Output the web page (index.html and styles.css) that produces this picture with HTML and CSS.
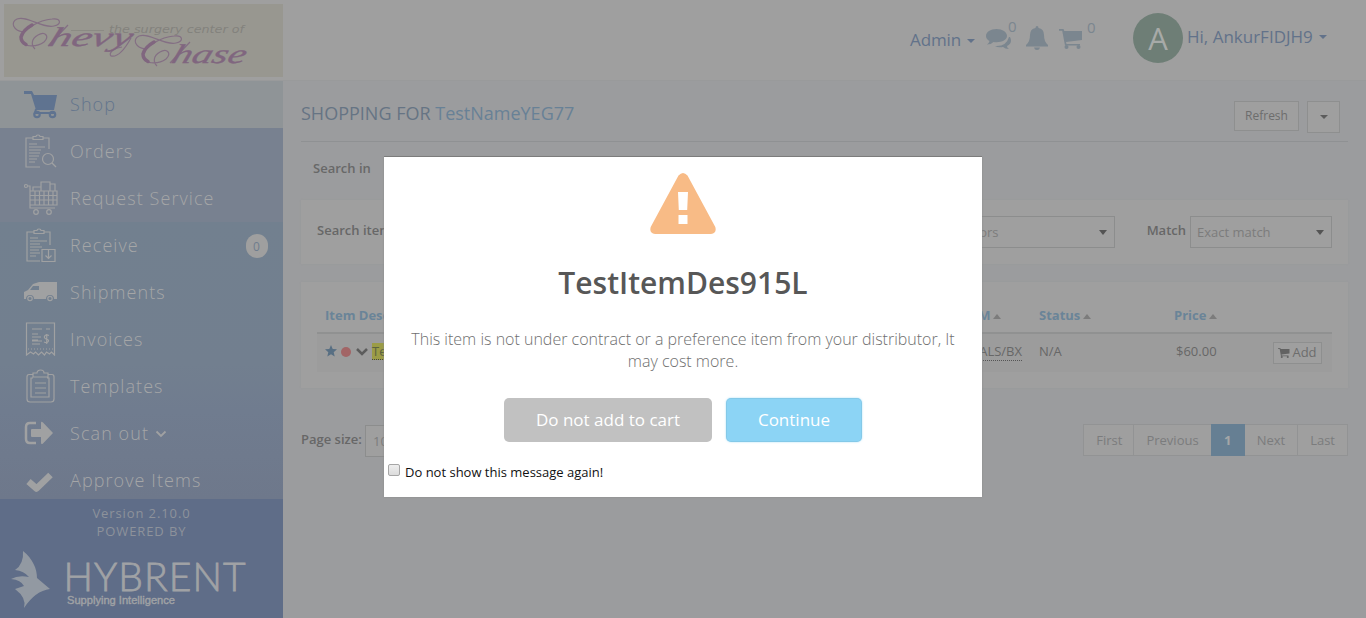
FILE: index.html
```html
<!DOCTYPE html>
<html lang="en">
<head>
<meta charset="utf-8">
<title>Hybrent - Shop</title>
<link rel="stylesheet" href="styles.css">
</head>
<body>
<div class="app">
  <aside class="sidebar">
    <div class="brand">
      <svg class="brand-logo" width="279" height="73" viewBox="0 0 279 73">
        <g class="swash">
          <path d="M20 28C9 27 6 18 13 15C23 11 38 25 50 22C58 20 57 14 48 15C36 16 18 25 17 35C16 43 32 44 40 38C46 32 41 27 34 31C27 35 27 41 31 45"/>
          <path d="M142 45C131 44 128 35 135 32C145 28 160 42 172 39C180 37 179 31 170 32C158 33 140 42 139 52C138 60 154 61 162 55C168 49 163 44 156 48C149 52 149 58 153 62"/>
          <path d="M64 21L44 42M186 38L166 59"/>
          <path d="M127 34C122 43 115 54 107 52C104 49 110 44 118 43"/>
          <path class="rule" d="M67 26.500H100"/>
        </g>
        <path class="swash-bold" d="M28 21Q19 26 17 33Q17 38 22 40.500M150 38Q141 43 139 50Q139 55 144 57.500"/>
        <text class="brand-small" x="105" y="28.500" textLength="135" lengthAdjust="spacingAndGlyphs">the surgery center of</text>
        <g transform="translate(43 41.500) skewX(-18)"><text class="brand-script" textLength="83" lengthAdjust="spacingAndGlyphs">hevy</text></g>
        <g transform="translate(166 58.500) skewX(-18)"><text class="brand-script" textLength="74" lengthAdjust="spacingAndGlyphs">hase</text></g>
      </svg>
    </div>
    <nav class="menu">
      <a class="item active"><svg width="34" height="34" viewBox="0 0 34 34"><path class="fill" d="M0 4h8l2 4h23l-3 15H12L7 7H0z"/><path d="M12 22l-1 4h20" stroke-width="2"/><circle cx="13" cy="27.500" r="2.700" stroke-width="2.200"/><circle cx="28.500" cy="27.500" r="2.700" stroke-width="2.200"/></svg><span>Shop</span></a>
      <a class="item"><svg width="34" height="34" viewBox="0 0 34 34"><path d="M16 33H2V4h7M19 4h6v11M9 2.500h3c0-2 4-2 4 0h3v3H9zM5 10h8M5 13h16M5 16h12M5 19h11M5 22h10M5 25h8M5 28h6"/><circle cx="24" cy="25" r="5.500"/><path d="M28 29l4 4"/></svg><span>Orders</span></a>
      <a class="item"><svg width="34" height="34" viewBox="0 0 34 34"><circle cx="2" cy="5" r="1.500"/><path d="M4 5h2v22h25M6 10h27v14H6M9 10V6h8M17 10V1h9v9M26 3h5v7M6 14.500h27M6 19h27M11 10v14M15.500 10v14M20 10v14M24.500 10v14M29 10v14"/><circle cx="12" cy="31" r="2.300"/><circle cx="25" cy="31" r="2.300"/></svg><span>Request Service</span></a>
      <a class="item"><svg width="34" height="34" viewBox="0 0 34 34"><path d="M16 33H3V4h7M20 4h6v13M10 2.500h3c0-2 4-2 4 0h3v3h-10zM6 10h8M6 13h17M6 16h10M6 19h12M6 22h9M6 25h10M6 28h6M18 21.500h13v12H18zM24.500 21v9M21.500 27.500l3 3 3-3"/></svg><span>Receive</span><b class="count">0</b></a>
      <a class="item"><svg width="34" height="34" viewBox="0 0 34 34"><path class="fill" fill-rule="evenodd" d="M0 24v-7l4-2 5-6 6-2h18v17h-3a4 4 0 0 0-8 0H10a4 4 0 0 0-8 0zM6 15h9v-4H9z"/><circle cx="6" cy="23.500" r="2.200"/><circle cx="26" cy="23.500" r="2.200"/></svg><span>Shipments</span></a>
      <a class="item"><svg width="34" height="34" viewBox="0 0 34 34"><path d="M2.500 33V1h28v32l-3-3-2 2-3-2-2 3-3-3-3 3-3-3-2 2-3-2zM8 7h10M22 7h4M8 12h6M8 15h9M8 18h6M8 19h10M8 22h8M25 13.500c-5-2-6 3-2.500 3.500s2 5-2.500 3M22.700 12v10"/><path d="M4 27h25" stroke-dasharray="1 2"/></svg><span>Invoices</span></a>
      <a class="item"><svg width="34" height="34" viewBox="0 0 34 34"><path d="M9 5.500H5Q3 5.500 3 8v22q0 3 3 3h21q3 0 3-3V8q0-2.500-2-2.500h-4M9 4h4c0-4 7-4 7 0h4v4H9zM9 9H7v19h18V9h-2M11 14h11M11 19h11M11 24h11"/></svg><span>Templates</span></a>
      <a class="item"><svg width="34" height="34" viewBox="0 0 34 34"><path d="M12 7H6Q2 7 2 11v12q0 4 4 4h6" stroke-width="2.500"/><path class="fill" d="M8 13h9V7q0-2 2-.500L29 17 19 27.500q-2 1.500-2-1V21H8Q7 21 7 20v-6q0-1 1-1z"/></svg><span>Scan out</span><svg class="chev" width="12" height="8" viewBox="0 0 12 8"><path d="M1.500 1.500L6 6l4.500-4.500" stroke-width="1.800"/></svg></a>
      <a class="item"><svg width="34" height="34" viewBox="0 0 34 34"><path d="M4.500 18.500l8 7L26.500 12" stroke-width="6.500" stroke-linejoin="round"/></svg><span>Approve Items</span></a>
    </nav>
    <div class="side-foot">
      <p>Version 2.10.0</p>
      <p>POWERED BY</p>
      <svg class="hybrent" width="283" height="75" viewBox="0 0 283 75">
        <path class="bird" d="M23 7C33 15 37 25 37 34L50 45Q35 47 24 64Q27 54 15 45L24 42Q21 36 11 35Q18 31 29 33Q24 27 15 26Q24 20 23 7z"/>
        <text class="hy-name" x="63.500" y="47" textLength="182" lengthAdjust="spacing">HYBRENT</text>
        <text class="hy-tag" x="67" y="60" textLength="108" lengthAdjust="spacingAndGlyphs">Supplying Intelligence</text>
      </svg>
    </div>
  </aside>

  <div class="main">
    <header class="topbar">
      <a class="admin">Admin <i class="caret"></i></a>
      <a class="chat"><svg width="26" height="22" viewBox="0 0 26 22"><path d="M24 9q3 6-3 9 0 2 2 3-4 0-6-2-5 1-8-1 11 1 14-9z"/><path d="M10.500 1C4.500 1 0 4 0 8q0 3 3.500 5Q3 15 1 16.500q4 0 6.500-2.500C15 15 21 12 21 8c0-4-4.500-7-10.500-7z"/></svg><sup>0</sup></a>
      <a class="bell"><svg width="22" height="24" viewBox="0 0 22 24"><path d="M11 0q1.500 0 1.500 2Q18 3 18 9q0 7 4 10v1.500H0V19q4-3 4-10 0-6 5.500-7Q9.500 0 11 0zM8 21.500h6Q13.500 24 11 24T8 21.500z"/></svg></a>
      <a class="cart"><svg width="24" height="20" viewBox="0 0 24 20"><path d="M0 0h4.500l.8 2H23v9L7 13l.5 2H21v1.500H6L3.200 1.700H0z"/><circle cx="7.500" cy="18" r="2"/><circle cx="19.500" cy="18" r="2"/></svg><sup>0</sup></a>
      <div class="avatar">A</div>
      <a class="user">Hi, AnkurFIDJH9 <i class="caret"></i></a>
    </header>

    <main class="content">
      <div class="heading">
        <h1>SHOPPING FOR <span>TestNameYEG77</span></h1>
        <button class="btn refresh">Refresh</button>
        <button class="btn more"><i class="caret"></i></button>
      </div>
      <div class="search-in">Search in</div>
      <section class="panel filters">
        <label>Search item</label>
        <div class="select vendors"><span>All Vendors</span><i class="caret"></i></div>
        <label class="match">Match</label>
        <div class="select exact"><span>Exact match</span><i class="caret"></i></div>
      </section>
      <section class="panel results">
        <div class="row head">
          <span class="desc">Item Description</span>
          <span class="uom">UOM <i class="up"></i></span>
          <span class="status">Status <i class="up"></i></span>
          <span class="price">Price <i class="up"></i></span>
        </div>
        <div class="row line">
          <span class="desc"><svg class="star" width="12" height="12" viewBox="0 0 12 12"><path d="M6 0l1.700 4 4.300.3-3.300 2.900 1 4.300L6 9.300l-3.700 2.200 1-4.300L0 4.300 4.300 4z"/></svg><i class="dot"></i><svg class="expand" width="12" height="9" viewBox="0 0 12 9"><path d="M1 2l5 5 5-5"/></svg><mark>TestItemDes915L</mark></span>
          <span class="uom"><u>VIALS/BX</u></span>
          <span class="status">N/A</span>
          <span class="price">$60.00</span>
          <button class="btn add"><svg width="12" height="10" viewBox="0 0 24 20"><path d="M0 0h4.500l.8 2H23v9L7 13l.5 2H21v1.500H6L3.200 1.700H0z"/><circle cx="7.500" cy="18" r="2"/><circle cx="19.500" cy="18" r="2"/></svg>Add</button>
        </div>
      </section>
      <div class="paging">
        <label>Page size:</label>
        <div class="select size"><span>10</span><i class="caret"></i></div>
        <ul class="pages"><li>First</li><li>Previous</li><li class="current">1</li><li>Next</li><li>Last</li></ul>
      </div>
    </main>
  </div>
</div>

<div class="overlay">
  <div class="modal">
    <svg class="warn" width="66" height="62" viewBox="0 0 66 62"><path fill-rule="evenodd" d="M28.500 2.500Q33-2.500 37.500 2.500L65.300 54Q67 60 61 61H5Q-1 60 .7 54zM28 19l.8 18h8.400l.8-18zM28.500 42v9h9v-9z"/></svg>
    <h2>TestItemDes915L</h2>
    <p>This item is not under contract or a preference item from your distributor, It may cost more.</p>
    <div class="actions"><button class="cancel">Do not add to cart</button><button class="confirm">Continue</button></div>
    <label class="again"><span class="box"></span>Do not show this message again!</label>
  </div>
</div>
</body>
</html>
```
FILE: styles.css
```css
* { box-sizing: border-box; }
body { margin: 0; height: 618px; overflow: hidden; background: #9b9c9e; font: 13px/18px "Open Sans", sans-serif; color: #676767; }
h1, h2, p, ul { margin: 0; padding: 0; }
button { font-family: inherit; padding: 0; }
svg { display: block; flex: none; }
.app { display: flex; height: 618px; }

.sidebar { width: 283px; flex: none; display: flex; flex-direction: column; }
.brand { height: 81px; flex: none; padding: 4px 0 0 4px; background: #9f9f9f; border-bottom: 1px solid #999a9b; }
.brand-logo { background: #989790; }
.swash { fill: none; stroke: #846f84; stroke-width: 1.200; }
.swash .rule { stroke: #8b8a84; stroke-width: 1; }
.swash-bold { fill: none; stroke: #80667f; stroke-width: 3.500; stroke-linecap: round; }
.brand-small { font: italic 10.500px "DejaVu Sans", sans-serif; fill: #83827d; }
.brand-script { font: italic 27px "Liberation Serif", serif; fill: #80667f; stroke: #80667f; stroke-width: .3; }
.menu { flex: 1; min-height: 0; overflow: hidden; background: linear-gradient(#788190 0, #788190 141px, #72808f 141px, #727f8f 282px, #707c8f 330px, #6e788b 100%); }
.item { display: flex; align-items: center; height: 47px; padding: 0 15px 0 24px; font-size: 18px; font-weight: 300; letter-spacing: 1.080px; color: #a5a6a7; white-space: nowrap; }
.item svg { fill: none; stroke: #a0a1a2; stroke-width: 1.200; }
.item > svg:first-child { margin-top: -1px; }
.item .fill { fill: #a0a1a2; stroke: none; }
.item > span { margin: -2px 0 0 12px; }
.item .chev { margin-left: 6px; }
.active { background: #8f9497; color: #63758d; }
.active svg { stroke: #5f7390; }
.active .fill { fill: #5f7390; }
.count { margin-left: auto; width: 22px; height: 24px; border-radius: 11px; background: #9f9f9f; color: #6f7d8e; font: 12px/26px "Open Sans", sans-serif; text-align: center; }
.side-foot { height: 119px; flex: none; padding-top: 5px; background: #5f6d88; color: #8d929b; text-align: center; letter-spacing: .9px; }
.hybrent { margin-top: 4px; letter-spacing: 0; }
.bird { fill: #9299a2; }
.hy-name { font: 300 39px Lato, sans-serif; fill: #a0a2a5; stroke: #a0a2a5; stroke-width: .8; }
.hy-tag { font: 11px "Liberation Sans", sans-serif; fill: #a0a2a5; stroke: #a0a2a5; stroke-width: .4; }

.main { flex: 1; min-width: 0; }
.topbar { height: 81px; display: flex; align-items: flex-start; background: #9f9f9f; border-bottom: 1px solid #999a9b; padding-left: 627px; font-size: 17px; line-height: 24px; color: #62728a; white-space: nowrap; }
.topbar svg { fill: #7b868f; }
.topbar a { display: flex; }
.caret { display: inline-block; flex: none; width: 0; height: 0; border: 4px solid transparent; border-top-color: currentColor; border-bottom: 0; align-self: center; }
.admin { margin-top: 28px; width: 76px; gap: 6px; letter-spacing: -.1px; }
.admin .caret { margin-top: 2px; }
.topbar sup { font-size: 15px; line-height: 20px; font-weight: 400; color: #7b868f; vertical-align: baseline; }
.chat { margin-top: 28px; width: 40px; }
.chat sup { margin: -12px 0 0 -4px; }
.bell { margin-top: 26px; width: 33px; }
.cart { margin-top: 29px; width: 74px; }
.cart sup { margin: -12px 0 0 4px; }
.avatar { width: 50px; height: 50px; margin-top: 13px; border-radius: 50%; background: #6e7e76; color: #a7aaa8; font-size: 31px; line-height: 50px; text-align: center; }
.user { margin: 25px 0 0 4px; gap: 6px; }

.content { padding: 0 18px; }
.heading { height: 61px; display: flex; border-bottom: 1px solid #8f9193; }
h1 { flex: 1; margin-top: 20px; font-size: 18px; line-height: 25px; font-weight: 400; color: #667484; }
h1 span { color: #688196; }
.btn { background: #9f9f9f; border: 1px solid #8e8f8f; color: #6d6d6d; font-size: 12px; }
.refresh { margin-top: 20px; width: 65px; height: 30px; padding-bottom: 2px; }
.more { margin: 20px 8px 0; width: 33px; height: 32px; display: flex; justify-content: center; align-items: center; color: #5c5c5c; }
.search-in { padding: 17px 12px 0; height: 58px; font-weight: 600; color: #686868; }
.panel { background: #9f9f9f; box-shadow: 0 0 2px #979899; padding: 16px; }
label { font-weight: 600; }
.filters { display: flex; height: 64px; }
.filters label { width: 80px; padding-top: 5px; }
.filters .match { width: auto; margin-left: auto; padding-right: 4px; }
.select { display: flex; align-items: center; justify-content: space-between; height: 32px; padding: 0 7px; border: 1px solid #8c8d8d; background: #9f9f9f; color: #7c7c7c; }
.select .caret { color: #545454; border-top-width: 5px; }
.vendors { width: 190px; margin-left: 528px; padding-left: 4px; }
.exact { width: 142px; padding-left: 6px; }
.results { height: 106px; margin-top: 18px; }
.row { display: grid; grid-template-columns: 633px 81px 135px 99px 49px; padding: 0 10px 0 8px; white-space: nowrap; }
.head { height: 36px; padding-top: 8px; border-bottom: 2px solid #909191; color: #6a8498; font-weight: 700; }
.line { height: 38px; padding-top: 8px; background: #9c9c9c; }
.up { display: inline-block; border: 4px solid transparent; border-top: 0; border-bottom-color: #7c7c7c; vertical-align: 1px; border-bottom-width: 5px; margin-left: -1px; }
.line .desc { display: flex; align-items: center; height: 18px; }
.star { fill: #586f83; }
.dot { width: 10px; height: 10px; margin: 2px 5px 0 4px; border-radius: 50%; background: #a26566; }
.expand { fill: none; stroke: #5c5c5c; stroke-width: 2.500; }
mark { margin-left: 4px; background: #9b9c46; color: #5b6240; border-bottom: 1px dotted #444; line-height: 16px; }
.uom u { text-decoration: none; border-bottom: 1px dotted #555; }
.line .uom { padding-right: 17px; }
.uom { text-align: right; }
.head .uom { padding-right: 43px; }
.line .price { padding-left: 2px; }
.add { display: flex; align-items: center; justify-content: center; gap: 2px; width: 49px; height: 22px; font-size: 13px; padding-bottom: 2px; }
.add svg { fill: #626262; margin-top: 1px; }
.paging { display: flex; margin-top: 36px; height: 32px; }
.paging label { width: 64px; padding-top: 6px; }
.size { width: 70px; height: 32px; margin-top: 1px; }
.pages { display: flex; list-style: none; margin-left: auto; border: 1px solid #929394; background: #9f9f9f; color: #7b7c7d; }
.pages li { line-height: 30px; padding: 0 12px; border-left: 1px solid #929394; }
.pages li:first-child { border-left: 0; padding-right: 11px; }
.pages .current { width: 34px; margin: -1px 0; padding: 0; line-height: 32px; text-align: center; background: #667f93; color: #a4a6a7; font-weight: 700; border: 0; }
.pages .current + li { border: 0; }

.overlay { position: absolute; inset: 0; padding-top: 157px; }
.modal { width: 598px; height: 340px; margin: 0 auto; background: #fff; box-shadow: 0 -1px 0 #7c7c7c, 0 0 2px #8a8a8a; text-align: center; overflow: hidden; }
.warn { margin: 16px auto 0; fill: #f8bb86; }
.modal h2 { margin-top: 28px; font-size: 30px; line-height: 40px; font-weight: 600; color: #575757; }
.modal p { margin: 25px 20px 0; font-size: 16px; line-height: 22px; font-weight: 300; color: #6f6f6f; }
.actions { display: flex; justify-content: center; gap: 14px; margin-top: 26px; }
.actions button { height: 44px; padding-bottom: 2px; border: 0; border-radius: 5px; color: #fff; font-size: 17px; font-weight: 500; }
.cancel { width: 208px; background: #c1c1c1; }
.confirm { width: 136px; background: #8cd4f5; box-shadow: 0 0 2px rgba(140,212,245,.8), inset 0 0 0 1px rgba(0,0,0,.05); }
.again { display: flex; align-items: center; margin: 21px 0 0 4px; color: #111; font-weight: 400; }
.box { width: 12px; height: 12px; margin: -4px 5px 0 0; border: 1px solid #a6a6a6; border-radius: 2px; background: linear-gradient(#eee, #dcdcdc); }
```
